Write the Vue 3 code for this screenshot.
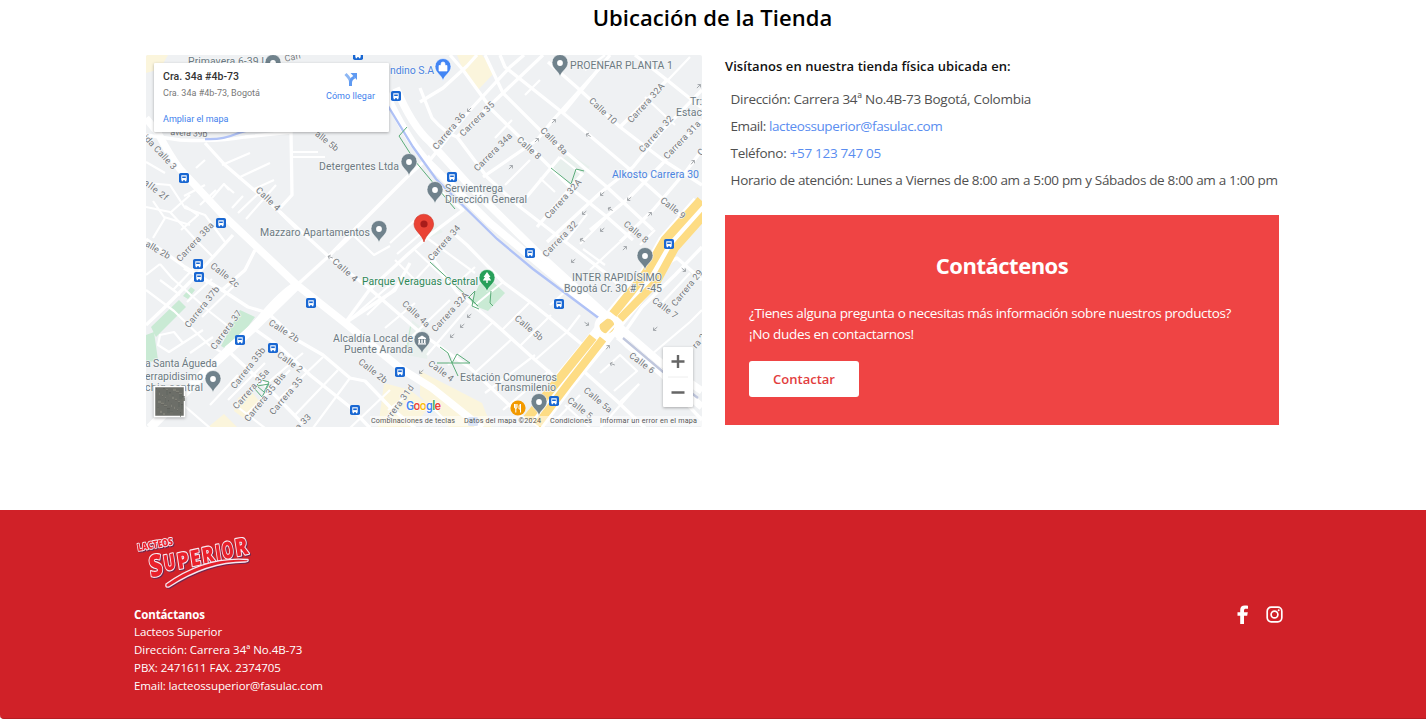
<script setup>
const blocks = [
  { c: '#fbf5dc', d: 'M146 55h22l-8 14-14 4zM457 55h25l13 17-17 18-15-20zM384 383l26 7 20 16-18 22h-34zM420 371l62 32 10 25h-42l-30-32zM238 398l12-8 12 14-16 16-12-9zM207 428l17-14 14 14z' },
  { c: '#c9ead4', d: 'M240 310l15 7-25 34-9-5zM151 327l28-27 7 7-30 30zM183 296l8-9 4 3-7 9zM146 335l8-3 4 28-12 3zM479 285l10-7 16 15-17 18-18-7zM410 326l9 8-6 20h-8z' },
  { c: '#e8f0ed', d: 'M412 320l18 14-3 25-20-4zM425 212l18 20-14 6zM548 168l22-14 20 13-19 19z' },
]
const wide = [
  'M146 118L158 133Q170 156 180 169L222 214 297 285 345 323 400 368 432 388 482 428',
  'M150 428L207 370 253 328Q282 292 297 285',
  'M385 92Q410 145 430 164L490 223 597 312 628 345 702 407',
  'M396 88Q412 126 430 142L468 184 540 255 608 317 660 362 702 391',
]
const mid = [
  'M297 285L330 255 357 227 407 177 430 156',
  'M430 160L470 110 510 67 524 55',
  'M146 135L180 140Q220 142 245 137L291 132',
  'M205 143L225 165 260 195 280 212 327 255 370 289',
  'M291 132L292 195 280 208 M280 212L300 232',
  'M420 88L432 118Q445 133 457 137L487 177 520 207 550 230 607 274 640 304',
  'M420 102L443 88 467 66 477 55',
  'M450 55L463 70 492 110 540 157 573 190 607 217 633 240',
  'M485 55L503 93 543 133 567 153 607 187 653 230',
  'M500 55L505 67 563 113 627 167 653 190 683 217',
  'M548 62L580 90 620 127 663 160 702 185',
  'M635 55L667 80 702 108',
  'M457 137L503 93 543 55', 'M483 177L537 140 553 120 580 90 607 60',
  'M520 205L560 157 M563 113L610 55', 'M537 227L583 173 M620 127L667 80',
  'M547 242L600 193 633 167 663 130 702 90', 'M590 230L630 197 663 163 702 120',
  'M620 242L653 210 687 170 702 150', 'M625 285L677 258 702 280',
  'M440 191L463 210 430 235 407 255 370 289 345 323',
  'M430 255L457 292 493 322 533 358 555 377',
  'M451 231L467 245 503 282 530 302 567 332 590 351',
  'M370 289L422 334 470 368 525 420', 'M345 323L395 290 410 263',
  'M146 239L185 267 222 290 248 307 268 313 297 340 323 355 350 378 365 381 390 407 415 428',
  'M233 235L213 257 190 282 163 309 146 325', 'M184 268L222 290 245 270 255 250',
  'M225 348L265 385 303 424', 'M253 328L280 347 310 375 350 407 370 428',
  'M617 338L650 363 685 402 702 420', 'M600 347L579 367 618 402 645 428',
  'M622 336L642 307 675 275 702 247',
]
const narrow = [
  'M146 183L170 185 185 208 205 215 225 242', 'M146 207L170 212 194 238 213 257', 'M153 201L164 217 190 225',
  'M184 196L205 185 M200 205L216 190 M170 213L190 195', 'M146 162L165 173', 'M222 165L250 153 M238 178L270 163 M252 190L274 180',
  'M185 206L198 215 181 230 M165 218L153 238', 'M146 290L174 311 209 345 228 356', 'M160 264L172 278 210 312 228 326',
  'M146 275L160 264 M160 280L180 295 M173 290L195 267 M187 302L212 279 M202 317L235 285',
  'M160 335L174 332 183 343 169 352 158 345z', 'M183 343L203 330 M190 353L213 337',
  'M225 348L250 327 M228 400L265 363 M247 414L290 370 M265 385L303 353 M280 398L323 357 M295 415L338 370 M313 428L350 378',
  'M235 405L265 428 M238 375L210 405 M180 402L210 428', 'M347 322L390 285 M367 315L400 283 M385 328L415 303 M405 343L450 300 M427 355L470 305 M448 365L493 322 M467 380L513 338 M485 393L535 355 M503 410L550 370',
  'M454 286L475 267 M475 305L503 282 M502 330L530 302 M520 346L551 315 M535 360L567 332 M550 305L567 290 M567 332L580 315',
  'M337 250L353 235 374 255 390 246', 'M395 260L415 280 439 254', 'M292 157H325 M292 152H318', 'M390 243L415 220 M397 254L425 230',
  'M427 238L475 273 M415 250L453 286', 'M512 120L495 138 M530 160L505 185 M560 157L583 175',
  'M540 178L555 192 M573 190L550 213 M607 217L580 244 M583 249L605 265 M565 242L587 214',
  'M590 270L620 242 M655 230L640 245', 'M610 345L580 365 M645 360L690 322 702 310 M675 258L650 285 M690 273L660 305',
  'M600 373L620 355 637 371 614 391 M639 384L620 402', 'M565 405L590 428 M555 421L580 395 M600 428L639 384',
  'M388 410L405 397 M350 428L390 390 M430 405L445 420', 'M585 70L605 55 M668 80L690 57 M645 97L675 125', 'M540 80L525 95',
  'M205 160L196 168 M212 198L224 184 229 190 M226 186L234 193 M232 208L243 196 M238 213L262 190 M246 219L276 185',
]
const bus = [[184,178],[221,223],[198,264],[199,277],[311,303],[240,340],[273,348],[400,372],[355,410],[358,55],[396,96],[452,177],[530,253],[559,304],[669,244],[554,401]]
const pins = [
  { x: 273, y: 63, c: '#70828c' }, { x: 409, y: 162, c: '#70828c' }, { x: 560, y: 63, c: '#70828c' }, { x: 435, y: 190, c: '#70828c' },
  { x: 379, y: 229, c: '#70828c' }, { x: 645, y: 256, c: '#70828c' }, { x: 422, y: 340, c: '#70828c', k: 'hall' },
  { x: 539, y: 402, c: '#70828c' }, { x: 213, y: 379, c: '#70828c' }, { x: 443, y: 67, c: '#4285f4', k: 'bag' }, { x: 487, y: 278, c: '#28a05a', k: 'tree' },
]
// [text, x, y, width, colour]
const places = [
  ['Primavera 6-39 I', 188, 65, 76], ['ndino S.A', 390, 74, 44, '#4b83e0'], ['PROENFAR PLANTA 1', 570, 69, 103],
  ['Tr:', 690, 104.5, 12], ['Estac', 676, 115.5, 26], ['Detergentes Ltda', 319, 170, 80], ['Servientrega', 445, 192, 58],
  ['Dirección General', 445, 202.5, 82], ['Alkosto Carrera 30', 612, 178, 87, '#4b83e0'], ['Mazzaro Apartamentos', 260, 236, 110],
  ['Parque Veraguas Central', 362, 285, 116, '#2f8757'], ['INTER RAPIDÍSIMO', 572, 281, 90], ['Bogotá Cr. 30 # 7 -45', 564, 291.5, 98],
  ['Alcaldía Local de', 333, 342, 80], ['Puente Aranda', 344, 352.5, 69], ['a Santa Águeda', 145, 367, 72], ['errapidisimo', 145, 380, 58],
  ['chiq central', 145, 391, 58], ['Estación Comuneros', 460, 380.5, 97], ['Transmilenio', 495, 391, 61],
]
// [text, centre x, centre y, angle, width]
const streets = [
  ['Carr', 293, 57, -12, 17], ['avera 39b', 189, 133, 3, 37], ['ida Calle 3', 160, 152, 47, 44], ['alle 2f', 156, 190, 38, 28], ['Calle 4', 268, 199, 44, 30],
  ['alle 5b', 327, 141, 38, 27], ['alle 2b', 158, 250, 30, 27], ['Carrera 38a', 195, 242, -47, 50],
  ['Calle 2c', 225, 275, 38, 34], ['Carrera 37b', 202, 307, -52, 50], ['Carrera 37', 226, 330, -54, 46], ['Calle 4', 345, 270, 42, 30],
  ['Calle 4a', 416, 314, 43, 34], ['Calle 2b', 284, 331, 33, 34], ['Calle 2', 290, 362, 36, 29], ['Carrera 35b', 248, 368, -52, 50],
  ['Carrera 35a', 251, 389, -49, 50], ['Carrera 35 Bis', 265, 397, -51, 60], ['Carrera 35', 286, 396, -50, 46], ['Calle 2b', 373, 371, 38, 34],
  ['rrera 31d', 400, 402, -54, 40], ['a 33', 303, 422, -45, 18], ['Carrera 36', 449, 131, -50, 45], ['Carrera 35', 477, 119, -45, 45],
  ['Carrera 34a', 493, 152, -45, 50], ['Calle 8', 529, 148, 42, 29], ['Calle 8a', 554, 141, 45, 34], ['Calle 10', 603, 111, 43, 34],
  ['Carrera 32A', 646, 103, -48, 50], ['Carrera 32', 656, 134, -48, 46], ['Carrera 31a', 682, 140, -46, 49], ['Calle 9', 673, 208, 38, 29],
  ['Carrera 32A', 563, 199, -48, 50], ['Carrera 34', 444, 243, -49, 44], ['Carrera 32', 560, 239, -46, 46], ['Calle 8', 636, 232, 40, 29],
  ['Carrera 32A', 450, 312, -48, 50], ['Calle 5b', 529, 328, 40, 34], ['Calle 7', 665, 308, 37, 29], ['Carrera 29', 687, 288, -51, 44],
  ['Calle 6', 642, 363, 37, 29], ['Calle 4', 441, 371, 37, 29], ['Calle 5a', 598, 400, 40, 34], ['Calle 5', 580, 408, 38, 29], ['ra 2', 699, 341, -50, 16], ['C', 701, 152, -45, 6],
]
const arrows = [[469,110,135],[554,121,-45],[537,140,-45],[511,167,-45],[588,135,210],[602,194,140],[629,199,140],[650,214,-50],[584,213,140],[602,230,140],[610,209,210],[573,261,140],[625,248,-45],[469,316,140],[462,326,140],[452,336,140],[587,324,35],[608,347,-50],[655,329,140],[684,270,40],[699,86,-45],[693,162,-50],[330,257,200],[421,372,140],[612,364,200],[582,240,210]]
const speckles = Array.from({ length: 70 }, (_, i) => ({
  x: 156 + ((i * 37) % 27), y: 388 + ((i * 53) % 26), w: 1 + (i % 3), h: 1 + ((i * 5) % 4), c: ['#575753', '#8b8b80', '#74756c', '#626862'][i % 4],
}))
// [letter, x, size, baseline, width]
const logo = [['S', 0, 30, 1, 13.5], ['U', 15, 22, -2, 12], ['P', 28.5, 22, -1, 12], ['E', 42, 22, -1, 10.5], ['R', 54, 22, -1, 12.5], ['I', 68, 22, -1, 5.5], ['O', 74.5, 23, -1, 12], ['R', 88, 24, -1, 13]]
</script>

<template>
  <main class="page">
    <section class="store">
      <h1><span>Ubicación de la Tienda</span></h1>
      <div class="columns">
        <svg class="map" viewBox="146 55 556 372" role="img" aria-label="Mapa">
          <rect x="146" y="55" width="556" height="373" fill="#eff1f3" />
          <path v-for="b in blocks" :key="b.c" :d="b.d" :fill="b.c" />
          <g fill="none" stroke="#fff" stroke-linejoin="round">
            <path v-for="(d, i) in narrow" :key="'n' + i" :d="d" stroke-width="2.2" />
            <path v-for="(d, i) in mid" :key="'m' + i" :d="d" stroke-width="3.3" />
            <path v-for="(d, i) in wide" :key="'w' + i" :d="d" stroke-width="7.5" />
            <path d="M150 428L207 370 253 328 297 285" stroke-width="9" />
          </g>
          <g fill="none">
            <path d="M205 139Q222 140 236 134T262 131M388 106L413 147 436 179 497 239 533 269 600 319" stroke="#b0c2f6" stroke-width="2.3" />
            <path d="M623 338L662 371 698 398" stroke="#c0c7dd" stroke-width="2.3" />
            <path d="M702 205L668 244 650 276 617 316 600 338 563 383 533 424" stroke="#fff" stroke-width="22" />
            <path d="M701 200L665 240 646 273 613 314M593 337L560 378 527 419" stroke="#fddc84" stroke-width="9" />
            <path d="M708 211L675 248 657 281 620 319M603 339L568 384 537 425" stroke="#fddc84" stroke-width="8" />
            <circle cx="607" cy="326" r="10" stroke="#fff" stroke-width="5" fill="#fbda83" />
            <path d="M595 327L610 315M603 338L619 321" stroke="#fff" stroke-width="2" />
            <path d="M407 127l-8 9 16 25 40 48M551 168l20 16 5-15 8 2M430 262l25 23 23 21-9-9 6-6-3 15 7 3M491 291l-1 12 3 3M440 347l8 6 4 10 5-9 13 9H437M452 363l6 13M254 388l8-8 7 2-5 10-7-6 12-2-7 13z" stroke="#5bac79" />
          </g>
          <path v-for="(a, i) in arrows" :key="'a' + i" :transform="`translate(${a[0]} ${a[1]}) rotate(${a[2]})`" d="M-3 0H2M0-2L2 0 0 2" fill="none" stroke="#969b9f" stroke-width=".8" />
          <g class="street">
            <text v-for="(s, i) in streets" :key="'s' + i" :transform="`translate(${s[1]} ${s[2]}) rotate(${s[3]})`" y="3" :textLength="s[4]" text-anchor="middle">{{ s[0] }}</text>
          </g>
          <g v-for="(b, i) in bus" :key="'b' + i" :transform="`translate(${b[0]} ${b[1]})`">
            <rect x="-5" y="-5" width="10" height="10" rx="1.8" fill="#1967d2" />
            <path d="M-2.7-2.8h5.4v5.1h-5.4zM-2.3 2h1.3v1.2h-1.3zM1 2h1.3v1.2H1z" fill="#fff" />
            <path d="M-1.8-1.6h3.6v1.7h-3.6z" fill="#1967d2" />
          </g>
          <g v-for="(p, i) in pins" :key="'p' + i" :transform="`translate(${p.x} ${p.y})`">
            <path d="M0 14C-1 8-8 6-8-.5a8 8 0 0 1 16 0C8 6 1 8 0 14z" :fill="p.c" stroke="#fff" stroke-width=".6" />
            <circle v-if="!p.k" r="2.9" fill="#fff" />
            <path v-else-if="p.k === 'bag'" d="M-4-1.5h8V4h-8zM-2-1.5V-3a2 2 0 0 1 4 0v1.5" fill="#fff" stroke="#fff" stroke-width=".7" />
            <path v-else-if="p.k === 'tree'" d="M0-6l3.5 5H2l2.2 3.5H.7V5H-.7V2.5h-3.5L-2-1h-1.5z" fill="#fff" />
            <path v-else d="M-4-2L0-4.5 4-2v1h-8zM-3.5-.5h1.5V3h-1.5zM-.7-.5H.7V3H-.7zM2-.5h1.5V3H2zM-4 3.3h8v1.2h-8z" fill="#fff" />
          </g>
          <g class="place">
            <text v-for="(p, i) in places" :key="'t' + i" :x="p[1]" :y="p[2]" :textLength="p[3]" :fill="p[4] || '#6d7a82'">{{ p[0] }}</text>
          </g>
          <path d="M424 242C422 234 414 231 414 224a9.8 9.8 0 0 1 19.6 0C433.6 231 426 234 424 242z" fill="#ea4335" stroke="#cf3529" stroke-width=".6" />
          <circle cx="424" cy="224" r="3.6" fill="#a91c1a" />
          <circle cx="518" cy="408" r="7.6" fill="#f29900" />
          <path d="M514.5 404v3q0 1.5 1.3 1.5v4M517 404v3q0 1.5-1.2 1.5M515.8 404v4.5M520.5 412.5v-8.5q-2 1-1.5 5h1.5" stroke="#fff" fill="none" />
          <rect x="468" y="417" width="10" height="9" rx="1.5" fill="#b7cbef" />
          <rect x="370" y="416" width="332" height="10" fill="#fff" opacity=".5" />
          <text class="google" x="406" y="409.5" textLength="35"><tspan fill="#4285f4">G</tspan><tspan fill="#ea4335">o</tspan><tspan fill="#fbbc05">o</tspan><tspan fill="#4285f4">g</tspan><tspan fill="#34a853">l</tspan><tspan fill="#ea4335">e</tspan></text>
          <g class="credits">
            <text x="371" y="422.5" textLength="84">Combinaciones de teclas</text>
            <text x="464" y="422.5" textLength="77">Datos del mapa ©2024</text>
            <text x="550" y="422.5" textLength="42">Condiciones</text>
            <text x="600" y="422.5" textLength="97">Informar un error en el mapa</text>
          </g>
          <g class="raised">
            <rect x="154" y="63" width="235" height="69" rx="1" fill="#fff" />
            <rect x="663" y="347" width="30" height="60" rx="1" fill="#fff" />
            <rect x="154.5" y="386.5" width="30" height="30" fill="#6c6e68" stroke="#fff" stroke-width="1.5" />
          </g>
          <rect v-for="(s, i) in speckles" :key="'k' + i" :x="s.x" :y="s.y" :width="s.w" :height="s.h" :fill="s.c" opacity=".6" />
          <path d="M668 377h20" stroke="#eee" />
          <path d="M671.5 361.5h13M678 355v13M671.5 392.5h13" stroke="#666" stroke-width="2.4" />
          <text class="card-title" x="163" y="80" textLength="76">Cra. 34a #4b-73</text>
          <text class="card-text" x="163" y="95.5" textLength="97" fill="#777">Cra. 34a #4b-73, Bogotá</text>
          <text class="card-text" x="163" y="121.5" textLength="65.5" fill="#427fed">Ampliar el mapa</text>
          <text class="card-text" x="326" y="98.5" textLength="49" fill="#427fed">Cómo llegar</text>
          <path d="M350.5 86v-4q0-3-5-8" fill="none" stroke="#8db7f4" stroke-width="3" />
          <path d="M350.5 86v-3q0-4 4-6" fill="none" stroke="#5f9af2" stroke-width="3" />
          <path d="M350.5 73h6.5v7z" fill="#5f9af2" />
        </svg>

        <div class="info">
          <h2><span>Visítanos en nuestra tienda física ubicada en:</span></h2>
          <ul>
            <li class="l1">Dirección: Carrera 34ª No.4B-73 Bogotá, Colombia</li>
            <li class="l2">Email: <a>lacteossuperior@fasulac.com</a></li>
            <li class="l3">Teléfono: <a>+57 123 747 05</a></li>
            <li class="l4">Horario de atención: Lunes a Viernes de 8:00 am a 5:00 pm y Sábados de 8:00 am a 1:00 pm</li>
          </ul>
          <div class="contact">
            <h3>Contáctenos</h3>
            <p>¿Tienes alguna pregunta o necesitas más información sobre nuestros productos?<br /><span>¡No dudes en contactarnos!</span></p>
            <button type="button">Contactar</button>
          </div>
        </div>
      </div>
    </section>

    <footer>
      <div class="footer-inner">
        <div>
          <svg class="logo" viewBox="134 530 120 62" width="120" height="62" role="img" aria-label="Lacteos Superior">
            <g class="letters">
              <g transform="translate(138 551) rotate(-10)"><text class="ink small" textLength="36" lengthAdjust="spacingAndGlyphs">LACTEOS</text></g>
              <g transform="translate(150.5 576.5) rotate(-12.5) skewX(-4)">
                <text v-for="(l, i) in logo" :key="i" class="ink" :x="l[1]" :y="l[3]" :font-size="l[2]" :textLength="l[4]" lengthAdjust="spacingAndGlyphs">{{ l[0] }}</text>
              </g>
              <path d="M166 584Q205 556 248 559.5Q249 562 245 562Q207 562 169 587Q165 588 166 584z" fill="#e3202b" stroke="#f6e8f1" stroke-width="1.3" />
            </g>
          </svg>
          <address>
            <strong>Contáctanos</strong>
            <span class="f1">Lacteos Superior</span>
            <span class="f2">Dirección: Carrera 34ª No.4B-73</span>
            <span class="f3">PBX: 2471611 FAX. 2374705</span>
            <span class="f4">Email: lacteossuperior@fasulac.com</span>
          </address>
        </div>
        <nav>
          <svg width="12" height="19" viewBox="0 0 12 19" aria-label="Facebook"><path d="M3.2 19V10.7H.5V7.3h2.700V5C3.2 1.900 4.900.5 7.700.5c1.300 0 2.400.1 3.300.3v3H9C7.600 3.800 7 4.400 7 5.600v1.700h3.800l-.6 3.400H7V19z" fill="#fff" /></svg>
          <svg width="17" height="17" viewBox="0 0 17 17" aria-label="Instagram"><rect x="1.2" y="1.2" width="14.6" height="14.6" rx="4" fill="none" stroke="#fff" stroke-width="1.7" /><circle cx="8.5" cy="8.5" r="3.4" fill="none" stroke="#fff" stroke-width="1.7" /><circle cx="12.7" cy="4.3" r="1" fill="#fff" /></svg>
        </nav>
      </div>
    </footer>
  </main>
</template>

<style>
html, body { background: #fff; overflow: hidden; }
</style>

<style scoped>
* { box-sizing: border-box; }
.page { display: flex; flex-direction: column; width: 1426px; height: 720px; overflow: hidden; font-family: "Open Sans", "Noto Sans", sans-serif; color: #111; }
.store { height: 510px; padding: 0 147px 0 146px; }
h1 { margin: 0; height: 55px; padding-top: 1px; text-align: center; font-size: 22px; line-height: 32px; font-weight: 600; color: #000; letter-spacing: .05px; }
.columns { display: grid; grid-template-columns: 556px 554px; gap: 23px; }
.map { width: 556px; height: 372px; display: block; font-family: Roboto, sans-serif; overflow: hidden; border-radius: 2px; }
.street text { font-size: 9px; fill: #74787c; stroke: #f5f6f7; stroke-width: 1.5px; paint-order: stroke; }
.place text { font-size: 10.5px; stroke: #f5f7f8; stroke-width: 1.5px; paint-order: stroke; }
.google { font-size: 12px; font-weight: 500; stroke: #fff; stroke-width: 1px; paint-order: stroke; }
.credits text { font-size: 7.2px; fill: #555; }
.raised { filter: drop-shadow(0 1px 1.5px rgba(0, 0, 0, .3)); }
.card-title { font-size: 10.5px; font-weight: 500; fill: #333; }
.card-text { font-size: 9px; }
.info { display: flex; flex-direction: column; }
h2 { margin: 0; font-size: 13px; line-height: 22px; font-weight: 600; white-space: nowrap; letter-spacing: .06px; }
ul { list-style: none; margin: 9px 0 0; padding: 0 0 0 5.5px; }
li { height: 27px; line-height: 27px; font-size: 13.5px; color: #505050; white-space: nowrap; }
.l1 { letter-spacing: -.28px; }
.l2 { letter-spacing: -.41px; }
.l3 { letter-spacing: -.3px; }
.l4 { letter-spacing: -.325px; }
a { color: #5a8df0; }
.contact { height: 210px; margin-top: 21px; padding: 34px 24px 0; background: #ef4444; color: #fff; }
h3 { margin: 0; text-align: center; font-size: 22px; line-height: 32px; font-weight: 700; letter-spacing: -.5px; }
p { margin: 22px 0 0; font-size: 13.5px; line-height: 21px; white-space: nowrap; letter-spacing: -.345px; }
p span { letter-spacing: -.31px; }
button { display: block; width: 110px; height: 36px; margin-top: 16px; padding: 0; border: 0; border-radius: 3px; background: #fff; color: #e23d3d; font: 600 13px "Open Sans", sans-serif; }
footer { height: 209px; background: #d02128; border-bottom: 1px solid #b71d24; border-bottom-left-radius: 4px; color: #fff; padding: 20px 143px 0 134px; }
.footer-inner { display: flex; justify-content: space-between; }
.logo { display: block; overflow: visible; }
.letters { filter: drop-shadow(1px 1.5px .7px #71264c); }
.ink { font-family: "Open Sans", sans-serif; font-weight: 800; fill: #ea202b; stroke: #f8edf5; stroke-width: 2.2px; paint-order: stroke; stroke-linejoin: round; }
.small { font-size: 10px; stroke-width: 1.8px; }
address { display: flex; flex-direction: column; align-items: flex-start; margin-top: 14px; font-style: normal; font-size: 11.5px; line-height: 18px; white-space: nowrap; letter-spacing: -.12px; }
strong { line-height: 17px; }
.f2 { letter-spacing: -.04px; }
.f3 { letter-spacing: -.04px; }
.f4 { letter-spacing: -.1px; }
nav { display: flex; align-items: center; gap: 17px; height: 19px; margin-top: 75px; }
</style>
